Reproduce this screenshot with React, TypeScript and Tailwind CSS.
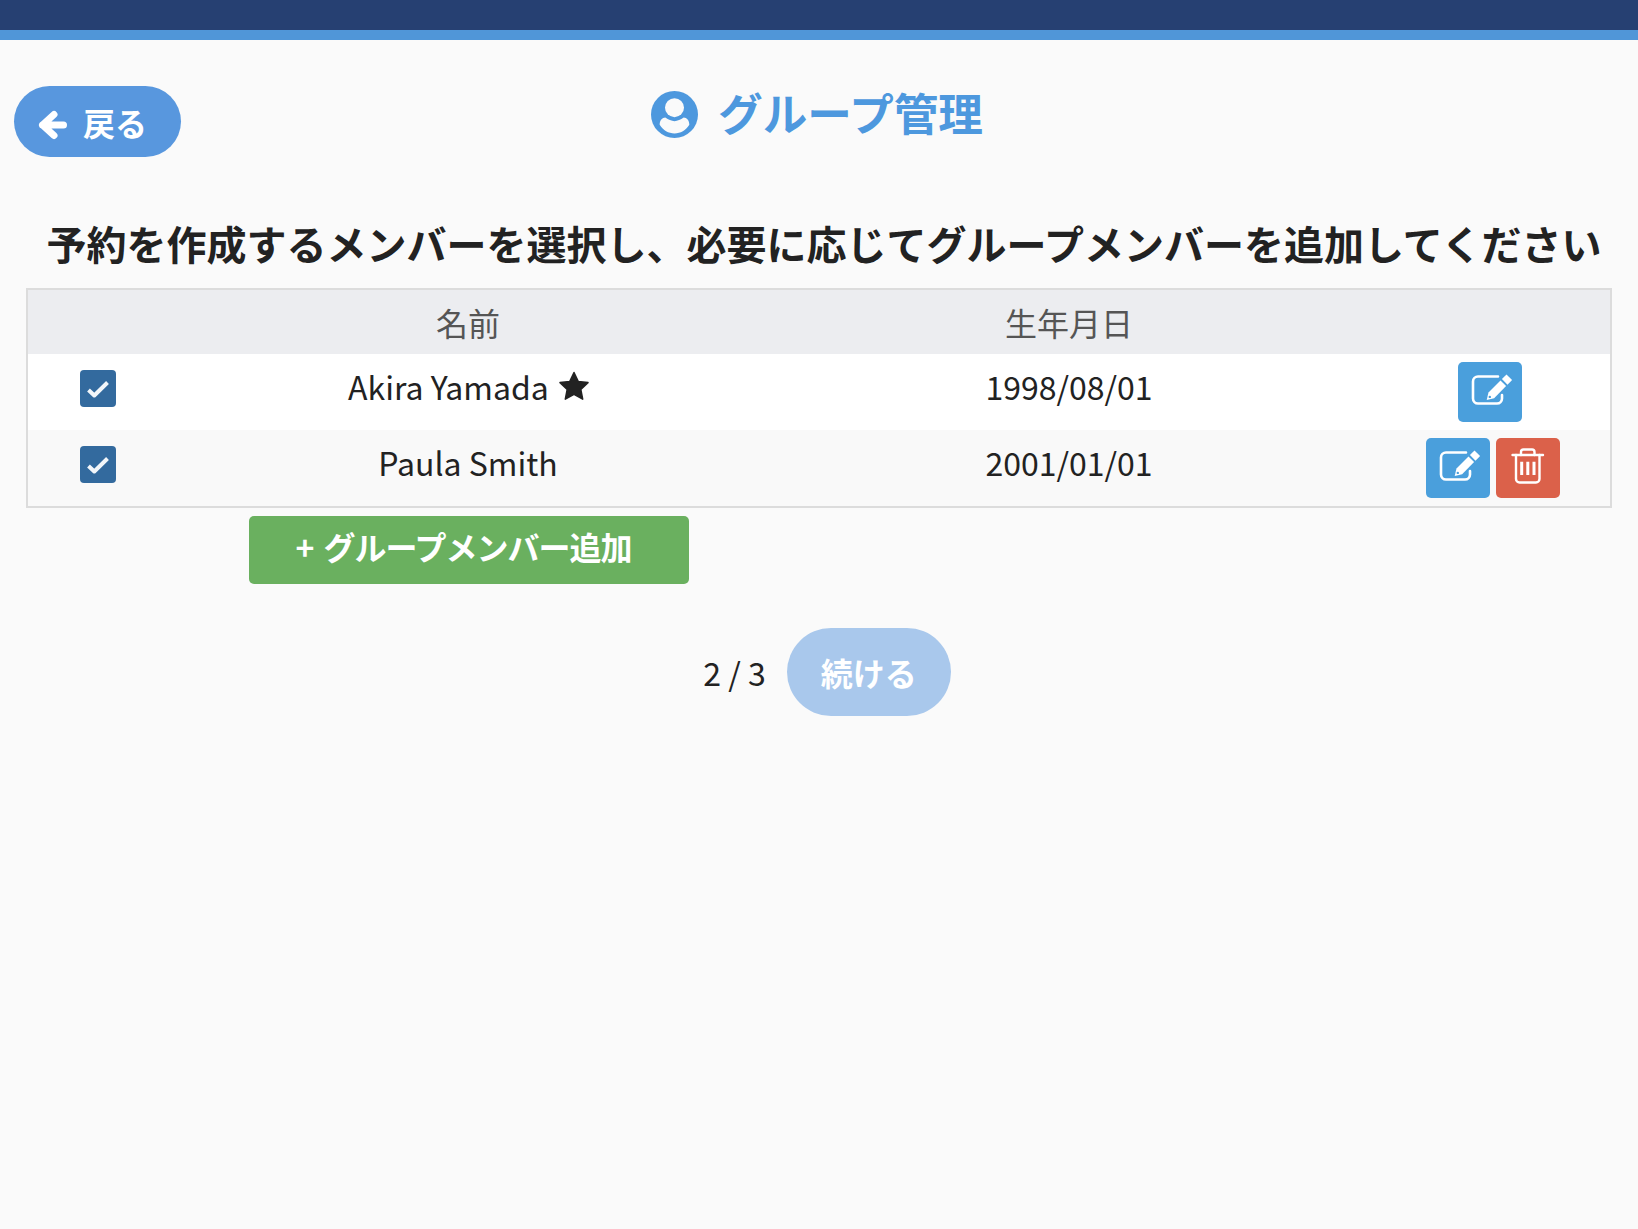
import React from 'react';

interface Member {
  name: string;
  birthday: string;
  owner?: boolean;
}

const members: Member[] = [
  { name: 'Akira Yamada', birthday: '1998/08/01', owner: true },
  { name: 'Paula Smith', birthday: '2001/01/01' }
];

const ArrowIcon = () => (
  <svg viewBox="0 0 30 30" className="mt-[6px] h-[30px] w-[30px]" fill="none" stroke="currentColor" strokeWidth="7" strokeLinecap="round" strokeLinejoin="round">
    <path d="M16 4.5 L4.5 15 L16 25.5 M4.5 15 H25.5" />
  </svg>
);

const UserIcon = () => (
  <svg viewBox="0 0 46 46" className="mt-[5px] h-[47px] w-[47px]">
    <circle cx="23" cy="23" r="23" fill="currentColor" />
    <circle cx="23" cy="16.3" r="9.3" fill="#fafafa" />
    <path
      d="M8.5 33 C8.5 29 11 26 14 26 C17 28 20 29.5 23 29.5 C26 29.5 29 28 32 26 C35 26 37.5 29 37.5 33 C34 38.5 29 41.5 23 41.5 C17 41.5 12 38.5 8.5 33 Z"
      fill="#fafafa"
    />
  </svg>
);

const StarIcon = () => (
  <svg viewBox="0 0 32 30" className="h-[30px] w-[32px]" fill="currentColor" stroke="currentColor" strokeWidth="1.5" strokeLinejoin="round">
    <path d="M16 1.5 L20.2 10.4 L30 11.6 L22.8 18.4 L24.7 28.2 L16 23.4 L7.3 28.2 L9.2 18.4 L2 11.6 L11.8 10.4 Z" />
  </svg>
);

const CheckIcon = () => (
  <svg viewBox="0 0 36 37" className="h-[37px] w-[36px]" fill="none" stroke="#f2f6fa" strokeWidth="4" strokeLinejoin="round">
    <path d="M8.5 20 L14.3 25.5 L27.5 12.5" />
  </svg>
);

const EditIcon = () => (
  <svg viewBox="0 0 64 60" className="h-[60px] w-[64px]">
    <path
      d="M40 14.5 H20 a5 5 0 0 0 -5 5 V36.5 a5 5 0 0 0 5 5 H39 a5 5 0 0 0 5 -5 V33"
      fill="none"
      stroke="currentColor"
      strokeWidth="2.6"
      strokeLinecap="round"
    />
    <path d="M28.7 38 L30.5 30.6 L42.5 18.5 L48.1 24.1 L36.1 36.2 Z" fill="currentColor" />
    <path d="M43.9 17.1 L48.5 12.5 L54.1 18.1 L49.5 22.7 Z" fill="currentColor" />
    <circle cx="31.8" cy="34.9" r="1.2" fill="#4a9fdc" />
  </svg>
);

const TrashIcon = () => (
  <svg viewBox="0 0 64 60" className="h-[60px] w-[64px]" fill="none" stroke="currentColor" strokeWidth="2.4" strokeLinecap="round" strokeLinejoin="round">
    <path d="M16.5 17 H47" />
    <path d="M25 17 V14 a2.5 2.5 0 0 1 2.5 -2.5 H36 a2.5 2.5 0 0 1 2.5 2.5 V17" />
    <path d="M20 17 V41 a3.5 3.5 0 0 0 3.5 3.5 H40 a3.5 3.5 0 0 0 3.5 -3.5 V17" />
    <path d="M25.7 23.7 V37 M31.8 23.7 V37 M38 23.7 V37" strokeLinecap="butt" strokeWidth="3" />
  </svg>
);

const App: React.FC = () => {
  return (
    <div className="min-h-[1229px] bg-[#fafafa] text-[#222] font-['Noto_Sans_CJK_JP','Noto_Sans',sans-serif]">
      {/* Top bar */}
      <div className="h-10 bg-[#264072] border-b-10 border-[#5096d8]" />

      {/* Header */}
      <div className="grid grid-cols-[1fr_auto_1fr] items-start pl-[14px] pt-[46px]">
        <button className="flex h-[71px] w-[167px] items-center justify-center gap-[15px] rounded-full bg-[#5897de] pr-[10px] text-[32px] font-bold text-white">
          <ArrowIcon />
          <span className="leading-none">戻る</span>
        </button>
        <h1 className="-ml-[18px] flex h-[52px] items-center gap-[20px] text-[44.6px] font-bold leading-none text-[#4d98de]">
          <UserIcon />
          グループ管理
        </h1>
        <div />
      </div>

      {/* Instructions */}
      <h2 className="mt-[54px] pl-[10px] text-center text-[40px] font-bold leading-[64px] text-[#222]">
        予約を作成するメンバーを選択し、必要に応じてグループメンバーを追加してください
      </h2>

      {/* Members */}
      <div className="mx-[26px] mt-[13px] w-[1586px] border-2 border-[#dcdcdc]">
        <table className="w-full table-fixed border-collapse text-[32px]">
          <colgroup>
            <col className="w-[140px]" />
            <col className="w-[600px]" />
            <col className="w-[602px]" />
            <col />
          </colgroup>
          <thead>
            <tr className="h-[64px] bg-[#ecedf0] text-[#555]">
              <th />
              <th className="font-normal">名前</th>
              <th className="font-normal">生年月日</th>
              <th />
            </tr>
          </thead>
          <tbody>
            {members.map((member, i) => (
              <tr key={member.name} className={i % 2 === 0 ? 'h-[76px] bg-white' : 'h-[76px] bg-[#f9f9f9]'}>
                <td className="pb-[8px]">
                  <div className="mx-auto h-[37px] w-[36px] rounded-[4px] bg-[#336a9e] text-white">
                    <CheckIcon />
                  </div>
                </td>
                <td className="pb-[12px] text-center">
                  <span className={member.owner ? 'inline-flex items-center gap-[9px] pl-[2px]' : 'inline-flex items-center'}>
                    {member.name}
                    {member.owner && <StarIcon />}
                  </span>
                </td>
                <td className="pb-[12px] text-center">{member.birthday}</td>
                <td>
                  <div className={member.owner ? 'flex justify-center gap-[6px]' : 'flex justify-center gap-[6px] pl-[6px]'}>
                    <button className="h-[60px] w-[64px] rounded-[5px] bg-[#4a9fdc] text-white">
                      <EditIcon />
                    </button>
                    {!member.owner && (
                      <button className="h-[60px] w-[64px] rounded-[5px] bg-[#db614a] text-white">
                        <TrashIcon />
                      </button>
                    )}
                  </div>
                </td>
              </tr>
            ))}
          </tbody>
        </table>
      </div>

      <div className="pl-[249px] pt-2">
        <button className="h-[68px] w-[440px] rounded-[5px] bg-[#6ab05f] pb-[8px] pr-[11px] text-[32px] font-bold tracking-[-1px] text-white">
          <span className="mr-[4px]">+</span> グループメンバー追加
        </button>
      </div>

      {/* Footer */}
      <div className="mt-[44px] flex items-center justify-center gap-[21px] pl-[16px]">
        <span className="text-[32px]">2 / 3</span>
        <button className="h-[88px] w-[164px] rounded-full bg-[#a9c8ec] text-[32px] font-bold text-white">
          続ける
        </button>
      </div>
    </div>
  );
};

export default App;
